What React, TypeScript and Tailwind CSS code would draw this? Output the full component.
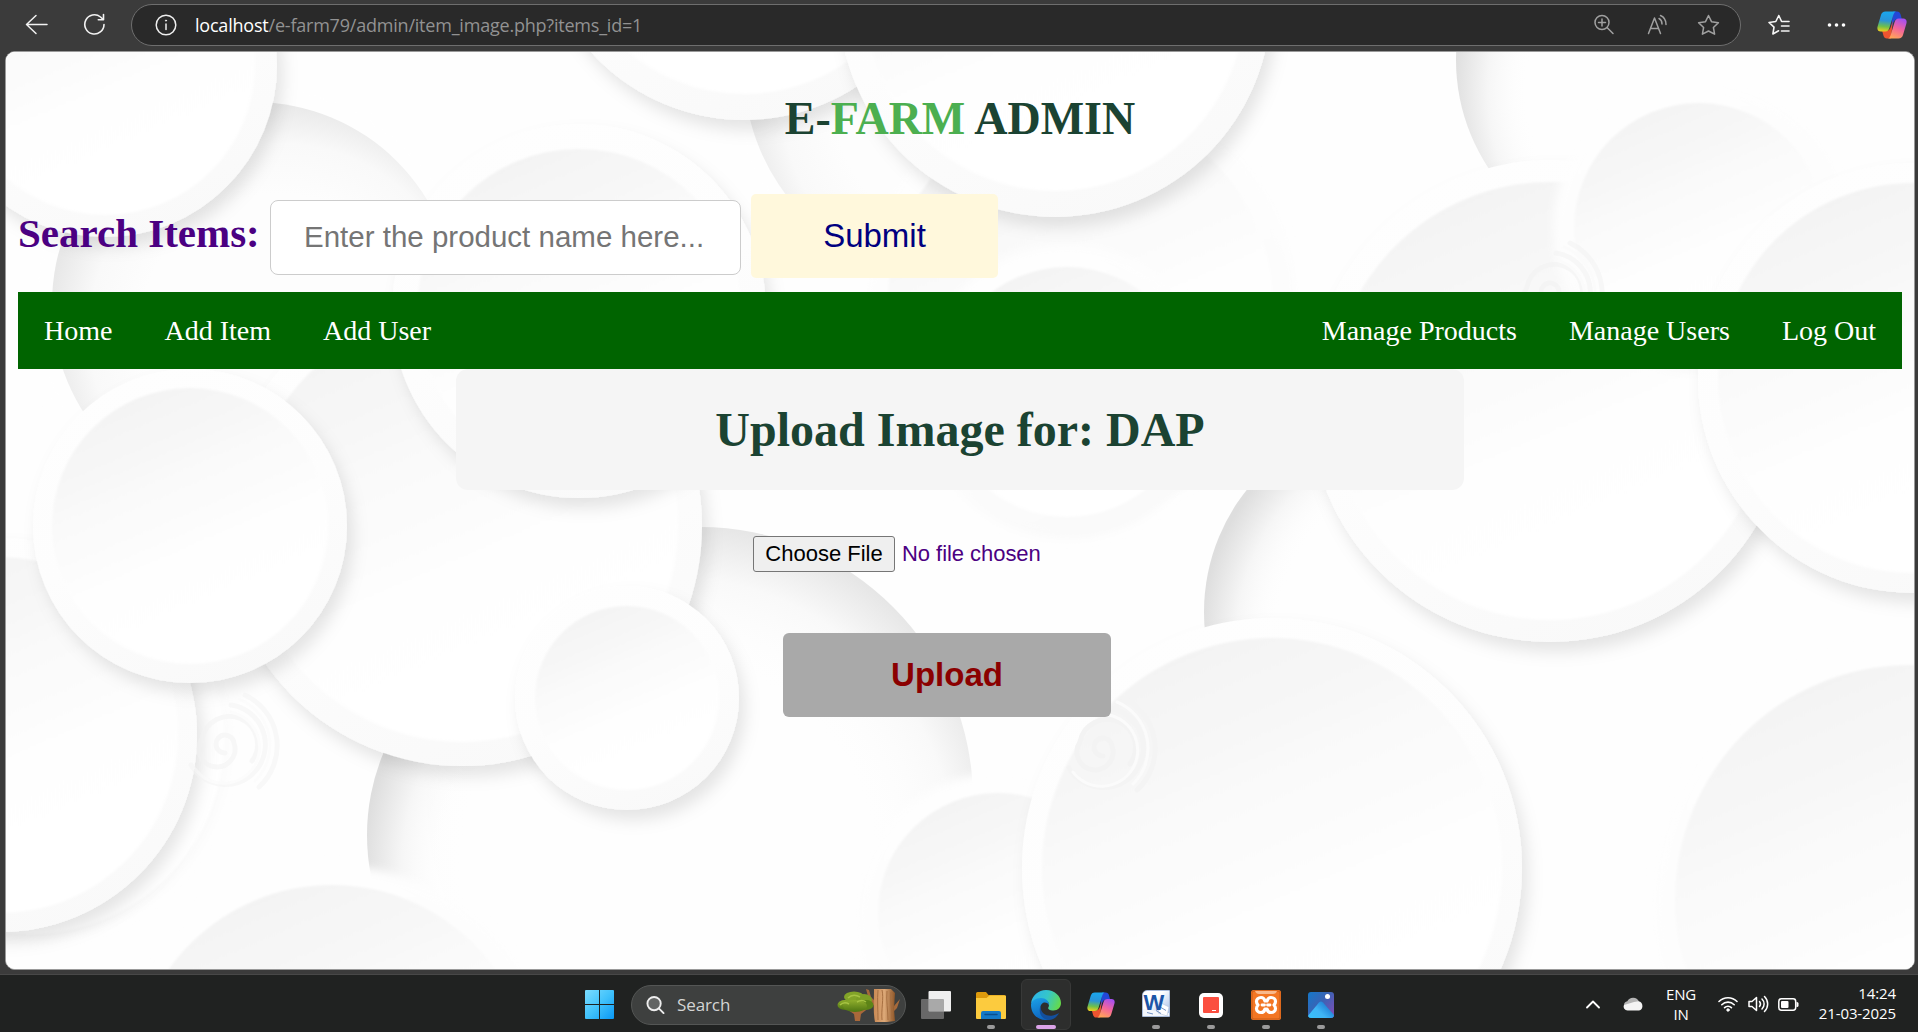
import React from "react";

type Disc = { cx: number; cy: number; r: number; R: number; kind?: "sunk" | "edge" | "edgeRight" | "plain" };

// Layered paper discs, listed from back to front.
const discs: Disc[] = [
  { cx: 700, cy: 800, r: 273, R: 290, kind: "edgeRight" },
  { cx: 580, cy: 835, r: 213, R: 235, kind: "edge" },
  { cx: 254, cy: 304, r: 202, R: 224, kind: "sunk" },
  { cx: 950, cy: 70, r: 206, R: 226, kind: "sunk" },
  { cx: 1652, cy: 60, r: 196, R: 216, kind: "edge" },
  { cx: 1400, cy: 612, r: 196, R: 218, kind: "edge" },
  { cx: 30, cy: 740, r: 194, R: 200, kind: "plain" },
  { cx: 1080, cy: 300, r: 192, R: 214, kind: "plain" },
  { cx: 1067, cy: 392, r: 125, R: 147, kind: "plain" },
  { cx: 462, cy: 526, r: 216, R: 240 },
  { cx: 579, cy: 311, r: 162, R: 187 },
  { cx: 744, cy: -86, r: 180, R: 206 },
  { cx: 1055, cy: 1, r: 190, R: 216 },
  { cx: 105, cy: 65, r: 150, R: 172 },
  { cx: 0, cy: 735, r: 178, R: 197 },
  { cx: 190, cy: 526, r: 138, R: 157 },
  { cx: 627, cy: 698, r: 92, R: 112 },
  { cx: 332, cy: 1085, r: 200, R: 220, kind: "plain" },
  { cx: 1550, cy: 401, r: 219, R: 241 },
  { cx: 1699, cy: 228, r: 125, R: 146, kind: "plain" },
  { cx: 1913, cy: 378, r: 195, R: 215 },
  { cx: 998, cy: 913, r: 120, R: 140, kind: "plain" },
  { cx: 1272, cy: 868, r: 230, R: 250 },
  { cx: 1910, cy: 900, r: 235, R: 255, kind: "plain" },
];

const Backdrop = () => (
  <svg className="absolute inset-0 h-full w-full" viewBox="6 52 1908 917" preserveAspectRatio="none" aria-hidden="true">
    <defs>
      <linearGradient id="raised" x1="0.3" y1="0.02" x2="0.7" y2="0.95">
        <stop offset="0" stopColor="#f3f3f3" />
        <stop offset="0.3" stopColor="#f9f9f9" />
        <stop offset="0.6" stopColor="#fefefe" />
        <stop offset="1" stopColor="#ffffff" />
      </linearGradient>
      <radialGradient id="sunk" cx="0.56" cy="0.57" r="0.57">
        <stop offset="0.6" stopColor="#fdfdfd" />
        <stop offset="0.82" stopColor="#f9f9f9" />
        <stop offset="1" stopColor="#e8e8e8" />
      </radialGradient>
      <radialGradient id="edge" cx="0.64" cy="0.58" r="0.65">
        <stop offset="0.7" stopColor="#fefefe" stopOpacity="0" />
        <stop offset="0.86" stopColor="#f6f6f6" />
        <stop offset="1" stopColor="#dedede" />
      </radialGradient>
      <radialGradient id="edgeRight" cx="0.44" cy="0.62" r="0.63">
        <stop offset="0.6" stopColor="#fdfdfd" stopOpacity="0" />
        <stop offset="0.84" stopColor="#f9f9f9" />
        <stop offset="1" stopColor="#e6e6e6" />
      </radialGradient>
      <linearGradient id="rim" x1="0.3" y1="0" x2="0.7" y2="1">
        <stop offset="0" stopColor="#fefefe" />
        <stop offset="0.5" stopColor="#fdfdfd" />
        <stop offset="1" stopColor="#f9f9f9" />
      </linearGradient>
      <filter id="drop" x="-20%" y="-20%" width="140%" height="150%">
        <feDropShadow dx="6" dy="10" stdDeviation="8" floodColor="#000" floodOpacity="0.1" />
      </filter>
      <filter id="soft" x="-5%" y="-5%" width="110%" height="110%">
        <feGaussianBlur stdDeviation="1.2" />
      </filter>
      <filter id="hazy" x="-5%" y="-5%" width="110%" height="110%">
        <feGaussianBlur stdDeviation="4" />
      </filter>
    </defs>
    <rect x="0" y="40" width="1920" height="940" fill="#fefefe" />
    {discs.map((d, i) => {
      if (d.kind === "edge") return <circle key={i} cx={d.cx} cy={d.cy} r={d.r} fill="url(#edge)" />;
      if (d.kind === "edgeRight") return <circle key={i} cx={d.cx} cy={d.cy} r={d.r} fill="url(#edgeRight)" />;
      if (d.kind === "sunk")
        return (
          <g key={i}>
            <circle cx={d.cx} cy={d.cy} r={d.R} fill="#fefefe" filter="url(#hazy)" />
            <circle cx={d.cx} cy={d.cy} r={d.r} fill="url(#sunk)" />
          </g>
        );
      return (
        <g key={i}>
          <circle cx={d.cx} cy={d.cy} r={d.R} fill="url(#rim)" filter={d.kind === "plain" ? "url(#hazy)" : "url(#drop)"} />
          <circle cx={d.cx} cy={d.cy} r={d.r} fill="url(#raised)" filter="url(#soft)" />
        </g>
      );
    })}
    {[
      [1103, 748, 1],
      [225, 745, 0.55],
      [1550, 293, 0.6],
    ].map(([x, y, o], i) => (
      <g key={i} transform={`translate(${x} ${y})`} fill="none" strokeLinecap="round" opacity={o}>
        <path d="M0 8a9 9 0 1 1 9-10a18 18 0 1 1-32-4a28 28 0 1 1 50 22" stroke="#f3f3f3" strokeWidth="5" />
        <path d="M-34 20a40 40 0 1 0 40-60M20-50a56 56 0 0 1 14 92" stroke="#f4f4f4" strokeWidth="5" />
        <path d="M-30 24a36 36 0 1 0 36-57M14-46a50 50 0 0 1 16 82" stroke="#fbfbfb" strokeWidth="3" />
      </g>
    ))}
  </svg>
);

const Copilot = ({ size }: { size: number }) => (
  <svg width={size} height={size} viewBox="0 0 30 30">
    <defs>
      <linearGradient id="cpA" x1="0.4" y1="0" x2="0.3" y2="1">
        <stop offset="0" stopColor="#19a7ee" />
        <stop offset="0.45" stopColor="#2a94d8" />
        <stop offset="0.75" stopColor="#6fc04a" />
        <stop offset="1" stopColor="#f2cf1d" />
      </linearGradient>
      <linearGradient id="cpB" x1="0.7" y1="0" x2="0.3" y2="1">
        <stop offset="0" stopColor="#a64ff0" />
        <stop offset="0.5" stopColor="#f3659b" />
        <stop offset="1" stopColor="#ffa557" />
      </linearGradient>
    </defs>
    <path d="M16 1.500h4c2 0 3 1.200 3.500 2.800l1.300 4.700h-4c-2.500 0-4 1.800-4.600 4l-2 6z" fill="#2347d8" />
    <path d="M14 28.500h-4c-2 0-3-1.200-3.500-2.800l-1.300-4.700h4c2.500 0 4-1.800 4.600-4l2-6z" fill="#ee5430" />
    <path d="M8.500 1.500h10.500c-1.500.5-2.200 2-2.700 3.500l-4 13.200c-.6 2-1.800 3.300-4 3.300H3.800C1 21.500-.2 19.400.6 16.500l3.400-11.500C4.700 2.800 6 1.500 8.500 1.500z" fill="url(#cpA)" />
    <path d="M21.500 28.500H11c1.500-.5 2.200-2 2.700-3.500l4-13.200c.6-2 1.800-3.300 4-3.300h4.500c2.800 0 4 2.100 3.200 5L26 25c-.7 2.200-2 3.500-4.500 3.500z" fill="url(#cpB)" />
  </svg>
);

const BrowserBar = () => (
  <header className="flex h-[51px] shrink-0 items-start bg-[#3b3b3b] pt-1 font-['Open_Sans',sans-serif]">
    <div className="flex h-[41px] w-[131px] shrink-0 items-center pl-[25px]">
      <svg width="23" height="22" viewBox="0 0 23 22" fill="none" stroke="#f2f2f2" strokeWidth="1.500" strokeLinecap="round" strokeLinejoin="round">
        <path d="M22 10.500H1.500M11 1.500l-9.500 9 9.500 9" />
      </svg>
      <svg className="ml-[35px]" width="23" height="23" viewBox="0 0 23 23" fill="none" stroke="#f2f2f2" strokeWidth="1.600" strokeLinecap="round" strokeLinejoin="round">
        <path d="M21 11.500A9.600 9.600 0 1 1 17.500 4l2.700 2.500M20.500 1.500v5.200h-5.200" />
      </svg>
    </div>
    <div className="flex h-[42px] w-[1610px] shrink-0 items-center rounded-full border border-[#6e6e6e] bg-[#292929] pl-[23px]">
      <svg width="22" height="22" viewBox="0 0 22 22" fill="none" stroke="#eee" strokeWidth="1.500" strokeLinecap="round">
        <circle cx="11" cy="11" r="9.800" />
        <path d="M11 10v5.500" />
        <circle cx="11" cy="6.600" r=".6" fill="#eee" strokeWidth="1" />
      </svg>
      <p className="ml-[18px] w-[460px] text-[18px] leading-[40px] tracking-[-0.210px] whitespace-nowrap text-[#929292]">
        <span className="text-white">localhost</span>/e-farm79/admin/item_image.php?items_id=1
      </p>
      <div className="ml-auto flex items-center pr-[20px]">
        <svg width="22" height="22" viewBox="0 0 22 22" fill="none" stroke="#a0a0a0" strokeWidth="1.500" strokeLinecap="round">
          <circle cx="9" cy="8.500" r="7" />
          <path d="M14 13.500l6 6M9 5v7M5.500 8.500h7" />
        </svg>
        <svg className="ml-[32px]" width="22" height="22" viewBox="0 0 22 22" fill="none" stroke="#a0a0a0" strokeWidth="1.500" strokeLinecap="round" strokeLinejoin="round">
          <path d="M1.500 19.500L7.500 4l6 15.500M3.600 14.500h7.800M12 4.500c2 1 3 3 3 5.500M13.500 1.500c3.500 1.500 5.500 5 5.500 9" />
        </svg>
        <svg className="ml-[28px]" width="23" height="22" viewBox="0 0 23 22" fill="none" stroke="#a0a0a0" strokeWidth="1.500" strokeLinejoin="round">
          <path d="M11.500 1.500l3 6.200 6.900 1-5 4.800 1.200 6.700-6.100-3.200-6.100 3.200 1.200-6.700-5-4.800 6.900-1z" />
        </svg>
      </div>
    </div>
    <div className="flex h-[42px] items-center pl-[27px]">
      <svg width="22" height="22" viewBox="0 0 22 22" fill="none" stroke="#f5f5f5" strokeWidth="1.600" strokeLinejoin="round" strokeLinecap="round">
        <path d="M14 7.500h-.4L10.800 1.500l-3 6-6.800 1 5 4.700-1.100 6.800 5.700-3.200M14.500 7.500H21M13.500 12H21M13.500 17H21" />
      </svg>
      <svg className="ml-[37px]" width="19" height="6" viewBox="0 0 19 6" fill="#fff">
        <circle cx="2.500" cy="3" r="1.800" />
        <circle cx="9.500" cy="3" r="1.800" />
        <circle cx="16.500" cy="3" r="1.800" />
      </svg>
      <span className="ml-[31px]">
        <Copilot size={30} />
      </span>
    </div>
  </header>
);

const Page = () => (
  <main className="relative mr-[3px] ml-[5px] h-[919px] shrink-0 overflow-hidden rounded-[10px] border border-[#9a9a9a] bg-white">
    <Backdrop />
    <div className="relative px-[12px] font-['Liberation_Serif',serif]">
      <h1 className="h-[142px] text-center text-[46px] leading-[133px] font-bold text-[#1b4332]">
        E-<span className="text-[#4caf50]">FARM</span> ADMIN
      </h1>
      <form className="flex h-[98px] items-start" onSubmit={(e) => e.preventDefault()}>
        <label htmlFor="q" className="w-[252px] text-[41px] leading-[78px] font-bold whitespace-nowrap text-[#4b0082]">
          Search Items:
        </label>
        <input
          id="q"
          placeholder="Enter the product name here..."
          className="mt-[6px] h-[75px] w-[471px] rounded-[8px] border border-[#ccc] bg-white px-[33px] pb-[2px] font-['Liberation_Sans',sans-serif] text-[29.500px] placeholder:text-[#757575]"
        />
        <button className="ml-[10px] h-[84px] w-[247px] rounded-[5px] bg-[#fff8dc] font-['Liberation_Sans',sans-serif] text-[33px] text-[#000080]">Submit</button>
      </form>
      <nav className="flex h-[77px] items-center justify-between bg-[#006400] px-[26px] text-[28px] text-white">
        <div className="flex gap-[52px]">
          <a>Home</a>
          <a>Add Item</a>
          <a>Add User</a>
        </div>
        <div className="flex gap-[52px]">
          <a>Manage Products</a>
          <a>Manage Users</a>
          <a>Log Out</a>
        </div>
      </nav>
      <h2 className="mx-auto h-[121px] w-[1008px] rounded-[12px] bg-[#f5f5f5] text-center text-[48px] leading-[121px] font-bold text-[#1b4332]">Upload Image for: DAP</h2>
      <div className="ml-[735px] flex flex-col items-start pt-[46px] font-['Liberation_Sans',sans-serif]">
        <div className="flex items-center text-[22px] text-[#4b0082]">
          <button className="h-[36px] w-[142px] rounded-[3px] border border-[#767676] bg-[#efefef] pb-[2px] text-black">Choose File</button>
          <span className="ml-[7px] pb-[2px] tracking-[-0.050px]">No file chosen</span>
        </div>
        <button className="mt-[61px] ml-[30px] h-[84px] w-[328px] rounded-[6px] bg-[#a9a9a9] text-[33px] font-bold text-[#8b0000]">Upload</button>
      </div>
    </div>
  </main>
);

const TreeArt = () => (
  <svg width="64" height="34" viewBox="0 0 64 34">
    <defs>
      <linearGradient id="leaf" x1="0" y1="0" x2="0" y2="1">
        <stop offset="0" stopColor="#8fae2c" />
        <stop offset="1" stopColor="#4d7412" />
      </linearGradient>
      <linearGradient id="bark" x1="0" y1="0" x2="1" y2="0">
        <stop offset="0" stopColor="#c98a55" />
        <stop offset="0.500" stopColor="#dca877" />
        <stop offset="1" stopColor="#8d5527" />
      </linearGradient>
    </defs>
    <path d="M8 20l9 6 1 7h5l1-7 9-7-10 4-4-3-3 3z" fill="#a9683a" />
    <path d="M29 1l3 1 2 7 5 5-1 5-6-7zM63 11l-6 7-4 2v7l7-7z" fill="#a5693a" />
    <path d="M37 1h17l4 4-1 16 1 12-8 1H38c-2-10-1-20-1-33z" fill="url(#bark)" />
    <path d="M41 2c-1 10 0 20 0 30M45 2c2 8-1 20 0 30M50 3c-1 9 1 20 1 29M54 4c-1 8 1 18 1 27" stroke="#a26a3c" strokeWidth=".9" fill="none" />
    <ellipse cx="8" cy="17" rx="7.500" ry="5" fill="url(#leaf)" />
    <ellipse cx="17" cy="9" rx="10" ry="5.500" fill="#82a428" />
    <ellipse cx="27" cy="12" rx="8" ry="6" fill="#7c9f25" />
    <ellipse cx="29" cy="17" rx="7.500" ry="5" fill="#5d8417" />
    <ellipse cx="18" cy="18" rx="12" ry="6" fill="url(#leaf)" />
    <path d="M3 17q4-4 9-1M11 10q5-5 12-1M20 14q5-3 9 0" stroke="#a6c343" strokeWidth="1.500" fill="none" />
  </svg>
);

const AppSlot = ({ children, active, running }: { children: React.ReactNode; active?: boolean; running?: boolean }) => (
  <div className="flex w-[55px] justify-center">
    <div
      className={
        active
          ? "relative flex h-[51px] w-[50px] items-center justify-center rounded-[6px] border border-[#383938] bg-[#2d2e2d]"
          : "relative flex h-[51px] w-[50px] items-center justify-center"
      }
    >
      {children}
      {active && <span className="absolute bottom-0 h-[4px] w-[20px] rounded-full bg-[#dba3e8]" />}
      {running && <span className="absolute bottom-px h-[4px] w-[8px] rounded-full bg-[#9a9a9a]" />}
    </div>
  </div>
);

const Taskbar = () => (
  <footer className="mt-[4px] flex h-[58px] shrink-0 items-start border-t border-[#484848] bg-[#202221] pt-[4px] font-['Open_Sans',sans-serif] text-white">
    <div className="ml-[585px] flex h-[51px] items-center">
      <svg width="29" height="29" viewBox="0 0 29 29">
        <defs>
          <linearGradient id="win" x1="0" y1="0" x2="1" y2="1">
            <stop offset="0" stopColor="#7bdcff" />
            <stop offset="0.500" stopColor="#41c2fb" />
            <stop offset="1" stopColor="#0a98f5" />
          </linearGradient>
        </defs>
        <path d="M1 0h13v14H0V1a1 1 0 0 1 1-1zM15 0h13a1 1 0 0 1 1 1v13H15zM0 15h14v14H1a1 1 0 0 1-1-1zM15 15h14v13a1 1 0 0 1-1 1H15z" fill="url(#win)" />
      </svg>
      <div className="ml-[17px] flex h-[40px] w-[275px] items-center rounded-full border border-[#545655] bg-[#3e403f] pl-[14px]">
        <svg width="19" height="20" viewBox="0 0 20 20" fill="#626463" stroke="#eee" strokeWidth="2" strokeLinecap="round">
          <circle cx="8.500" cy="8.500" r="7" />
          <path d="M13.800 13.800l4.700 4.700" />
        </svg>
        <span className="ml-[12px] text-[17px] tracking-[-0.100px] text-[#d4d4d4]">Search</span>
        <span className="mr-[4px] ml-auto">
          <TreeArt />
        </span>
      </div>
      <div className="ml-[2px] flex">
        <AppSlot>
          <svg width="30" height="28" viewBox="0 0 30 28">
            <rect x="7.500" y="0" width="22.500" height="20.500" rx="1" fill="#efefef" />
            <path d="M1 8h6.500v12.500h15.500V27a1 1 0 0 1-1 1H1a1 1 0 0 1-1-1V9a1 1 0 0 1 1-1z" fill="#686868" />
            <path d="M7.500 8H22a1 1 0 0 1 1 1v11.500H7.500z" fill="#a9a9a9" />
          </svg>
        </AppSlot>
        <AppSlot running>
          <svg className="mt-[2px]" width="30" height="27" viewBox="0 0 30 27">
            <path d="M0 1.500A1.500 1.500 0 0 1 1.500 0H10l2.500 3H28a2 2 0 0 1 2 2v4H0z" fill="#dd9a0c" />
            <path d="M0 6h10.500l3-2.500H29a1 1 0 0 1 1 1V26a1 1 0 0 1-1 1H1a1 1 0 0 1-1-1z" fill="#fccb3e" />
            <path d="M5 27v-6a2 2 0 0 1 2-2h16a2 2 0 0 1 2 2v6z" fill="#1579c6" />
            <path d="M9 22.500h12" stroke="#0c4f8d" strokeWidth="1.500" strokeLinecap="round" />
          </svg>
        </AppSlot>
        <AppSlot active>
          <svg width="30" height="30" viewBox="0 0 30 30">
            <defs>
              <linearGradient id="eTop" x1="0" y1="0.300" x2="1" y2="0.600">
                <stop offset="0" stopColor="#2cb3ea" />
                <stop offset="0.500" stopColor="#35c6c9" />
                <stop offset="1" stopColor="#65da4a" />
              </linearGradient>
              <linearGradient id="eLeft" x1="0.300" y1="0" x2="0.600" y2="1">
                <stop offset="0" stopColor="#1a9de4" />
                <stop offset="1" stopColor="#0d62be" />
              </linearGradient>
            </defs>
            <path d="M0 13.500C1 5.500 7.500 0 15 0c8.500 0 15 6 15 13 0 4.500-3.300 7.500-7.500 7.500-4 0-6-1.500-5.200-3 1.700-2.500.7-7.500-5.300-7.500C6 10 1.500 11.500 0 13.500z" fill="url(#eTop)" />
            <path d="M0 15C0 11 4.500 8 10 8c5 0 8.500 3.500 8 7.500-.5-1.800-2-3-4.300-3-2.500 0-4.400 2.500-4.400 6 0 5 4.500 10.300 9.700 11C8.500 32 0 25 0 15z" fill="url(#eLeft)" />
            <path d="M9.700 16.500c-.3 6 5 9.700 10.800 9.200 3.200-.3 6-1.700 7.500-2.700-2 4.500-6.500 7-10.500 6.900-5.500-.2-10-5.400-8.500-12.400z" fill="#134f9d" />
          </svg>
        </AppSlot>
        <AppSlot>
          <Copilot size={28} />
        </AppSlot>
        <AppSlot running>
          <div className="relative mb-[3px] h-[27px] w-[28px] rounded-tl-[5px] border border-[#a9bbd9] bg-linear-to-br from-white from-40% to-[#9db8e4]">
            <svg className="absolute inset-0" width="26" height="25" viewBox="0 0 26 25">
              <path d="M0 18l14 2 12 2v3H0z" fill="#f4f7fc" />
              <path d="M18 12l8 4-2 9-9-3z" fill="#fff" stroke="#b4c4de" strokeWidth=".6" />
              <path d="M4 21.500l6 1.500M13 19.500l5 3M18 16.500l5 3" stroke="#7291c4" strokeWidth="1" />
            </svg>
            <span className="relative block pr-[3px] text-center font-['Liberation_Sans',sans-serif] text-[22px] leading-[23px] font-bold text-[#1c55a7]">W</span>
          </div>
        </AppSlot>
        <AppSlot running>
          <div className="mt-px flex h-[25px] w-[24px] items-center justify-center rounded-[5px] bg-white">
            <div className="flex h-[16px] w-[16px] items-end justify-end rounded-[1px] bg-[#fb4f40] pr-[3px] pb-[2px]">
              <span className="h-px w-[4px] bg-white" />
            </div>
          </div>
        </AppSlot>
        <AppSlot running>
          <svg width="30" height="30" viewBox="0 0 30 30">
            <rect width="30" height="30" rx="2.500" fill="#f37623" />
            <rect x="1" y="1" width="28" height="28" rx="2" fill="none" stroke="#c95d18" />
            <path d="M4 1h22q-1 3-4 3H8Q5 4 4 1z" fill="#f9b98b" />
            <path
              d="M10 7.500c-2.600 0-4.500 1.800-4.500 4 0 1.400.6 2.500 1.500 3.500-.9 1-1.500 2.100-1.500 3.500 0 2.200 1.900 4 4.500 4 2.200 0 3.400-1.200 4-3.500h2c.6 2.300 1.800 3.500 4 3.500 2.600 0 4.500-1.800 4.500-4 0-1.400-.6-2.500-1.500-3.500.9-1 1.500-2.100 1.500-3.500 0-2.200-1.900-4-4.500-4-2.200 0-3.400 1.200-4 3.500h-2c-.6-2.300-1.800-3.500-4-3.500z"
              fill="none"
              stroke="#fff"
              strokeWidth="3.200"
              strokeLinejoin="round"
            />
            <path d="M11 15h2.500M16.500 15h2.500" stroke="#fff" strokeWidth="2.800" strokeLinecap="round" />
          </svg>
        </AppSlot>
        <AppSlot running>
          <svg width="26" height="26" viewBox="0 0 26 26">
            <defs>
              <linearGradient id="phBg" x1="0" y1="0" x2="1" y2="0.8">
                <stop offset="0" stopColor="#1478c9" />
                <stop offset="0.500" stopColor="#3a63b4" />
                <stop offset="1" stopColor="#7a4fb6" />
              </linearGradient>
              <linearGradient id="phHill" x1="0" y1="1" x2="1" y2="0.3">
                <stop offset="0" stopColor="#35c3fb" />
                <stop offset="0.5" stopColor="#3fb5f5" />
                <stop offset="1" stopColor="#1672cd" />
              </linearGradient>
              <clipPath id="phClip">
                <rect width="26" height="26" rx="3" />
              </clipPath>
            </defs>
            <g clipPath="url(#phClip)">
              <rect width="26" height="26" fill="url(#phBg)" />
              <path d="M-1 25L11 10.500q2-2 4 0L26 23v4H-1z" fill="url(#phHill)" />
              <circle cx="19.500" cy="4.500" r="2.500" fill="#fff" />
            </g>
          </svg>
        </AppSlot>
      </div>
    </div>
    <div className="mr-[22px] ml-auto flex h-[50px] items-center text-[15px] leading-[20px]">
      <svg width="14" height="9" viewBox="0 0 14 9" fill="none" stroke="#fff" strokeWidth="1.800" strokeLinecap="round" strokeLinejoin="round">
        <path d="M1 7.500L7 1.500l6 6" />
      </svg>
      <svg className="ml-[23px]" width="20" height="14" viewBox="0 0 20 14">
        <path d="M4 12a4 4 0 0 1 .3-7.800A6.500 6.500 0 0 1 16 4.500l-8 6z" fill="#b5b5b5" />
        <path d="M11 5l4.500-.7A4.800 4.800 0 0 1 16 13.600H4.500A4 4 0 0 1 1 8z" fill="#f4f4f4" />
      </svg>
      <p className="mb-px ml-[20px] w-[36px] text-center text-[15px] tracking-[-0.200px]">
        ENG
        <br />
        IN
      </p>
      <svg className="ml-[19px]" width="20" height="16" viewBox="0 0 20 16" fill="none" stroke="#fff" strokeWidth="1.600" strokeLinecap="round">
        <path d="M1 5.500a12.700 12.700 0 0 1 18 0M3.800 8.700a8.800 8.800 0 0 1 12.400 0M6.600 11.700a4.900 4.900 0 0 1 6.800 0" />
        <circle cx="10" cy="14" r="1.200" fill="#fff" strokeWidth="1" />
      </svg>
      <svg className="ml-[10px]" width="21" height="18" viewBox="0 0 21 18" fill="none" stroke="#fff" strokeWidth="1.500" strokeLinecap="round" strokeLinejoin="round">
        <path d="M1 6.500h3L8.500 2.500v13L4 11.500H1zM11.500 6.500a4 4 0 0 1 0 5M14 4a7 7 0 0 1 0 10M16.500 1.500a10.500 10.500 0 0 1 0 15" />
      </svg>
      <svg className="ml-[9px]" width="21" height="13" viewBox="0 0 21 13">
        <rect x=".8" y=".8" width="16.900" height="11.400" rx="2.600" fill="none" stroke="#fff" strokeWidth="1.500" />
        <rect x="3" y="3" width="7.500" height="7" rx="1" fill="#fff" />
        <path d="M18.500 4h.5a1.500 1.500 0 0 1 1.500 1.500v2A1.500 1.500 0 0 1 19 9h-.5z" fill="#fff" />
      </svg>
      <p className="mb-[2px] w-[97px] text-right whitespace-nowrap text-[15px] tracking-[-0.100px]">
        14:24
        <br />
        21-03-2025
      </p>
    </div>
  </footer>
);

export default function App() {
  return (
    <div className="flex h-[1032px] w-[1918px] flex-col overflow-hidden bg-[#3b3b3b]">
      <BrowserBar />
      <Page />
      <Taskbar />
    </div>
  );
}
